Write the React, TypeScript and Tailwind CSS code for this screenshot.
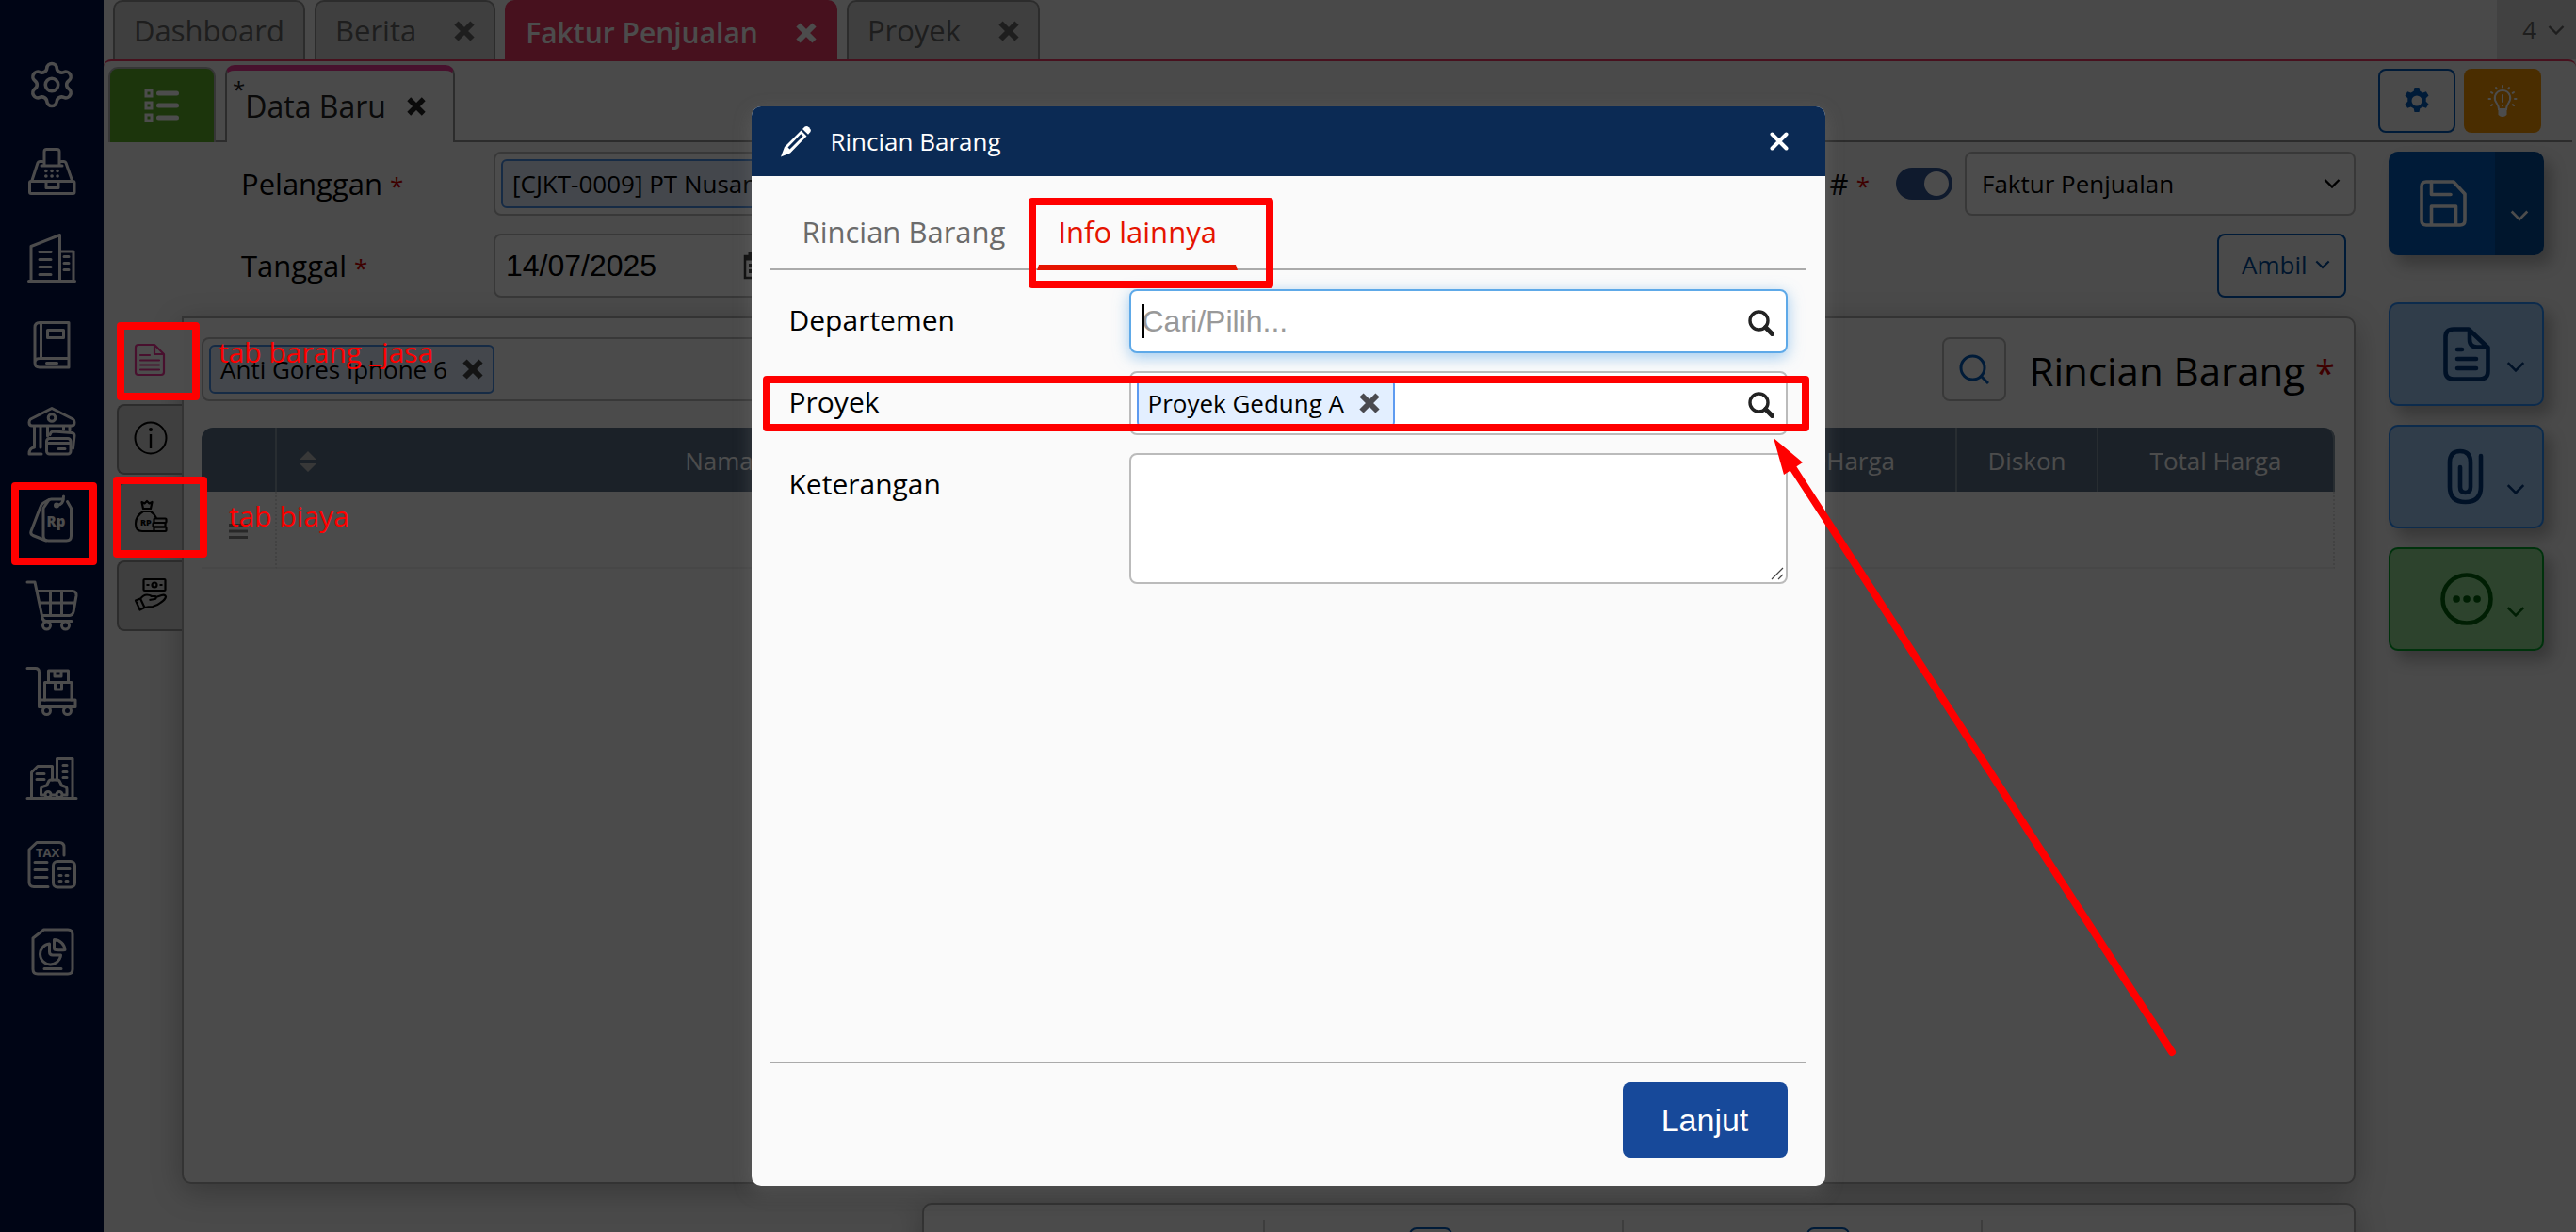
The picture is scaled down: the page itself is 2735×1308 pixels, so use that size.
import React, { useState } from 'react';
import { Settings } from 'lucide-react';

interface IconProps {
  className?: string;
}

// ---------- Small shared icons ----------

const Cross: React.FC<IconProps> = ({ className = 'size-[22px]' }) => (
  <svg viewBox="0 0 22 22" className={className} fill="none" stroke="currentColor" strokeWidth="6" aria-hidden="true">
    <path d="M2.5 2.5l17 17M19.5 2.5l-17 17" />
  </svg>
);

const Chevron: React.FC<IconProps> = ({ className = 'w-[18px] h-[10px]' }) => (
  <svg viewBox="0 0 18 10" className={className} fill="none" stroke="currentColor" strokeWidth="2.4" aria-hidden="true">
    <path d="M1.5 1l7.500 7.500L16.500 1" />
  </svg>
);

const Magnifier: React.FC<IconProps> = ({ className }) => (
  <svg viewBox="0 0 28 28" className={className} fill="none" stroke="currentColor" aria-hidden="true">
    <circle cx="11.500" cy="11.500" r="9.500" strokeWidth="3.400" />
    <path d="M18.500 18.500l7 7" strokeWidth="5" strokeLinecap="round" />
  </svg>
);

// ---------- Sidebar icons, all drawn on a 56 grid ----------

const SideIcon: React.FC<{ children: React.ReactNode }> = ({ children }) => (
  <svg viewBox="0 0 56 56" className="size-14" fill="none" stroke="currentColor" strokeWidth="3" strokeLinecap="round" strokeLinejoin="round" aria-hidden="true">
    {children}
  </svg>
);

const sideMenu: { label: string; icon: React.ReactNode }[] = [
  { label: 'Pengaturan', icon: <Settings className="size-[54px]" strokeWidth={1.6} aria-hidden="true" /> },
  {
    label: 'Kasir',
    icon: (
      <SideIcon>
        <path d="M20 22V7q0-2.500 2.500-2.500h11Q36 4.500 36 7v15M17 22h22M18 17.500h-3q-1.500 0-2 1.500L7 37.500M38 17.500h3q1.500 0 2 1.500l6.500 18.500" />
        <rect x="4.500" y="38.500" width="47.500" height="13" rx="1.500" />
        <path d="M22 39v6.500h13V39" />
        <path d="M21.800 27.500h.1M28 27.500h.1M34 27.500h.1M21.800 33h.1M28 33h.1M34 33h.1" strokeWidth="3.600" />
      </SideIcon>
    ),
  },
  {
    label: 'Perusahaan',
    icon: (
      <SideIcon>
        <path d="M3.500 52.500h49M6 52V15.500L36.500 3.500V52M36.500 21H51v31" />
        <path d="M15 21.500h12M15 29.500h12M15 37.500h12M15 45.500h12M41 26.500h5M41 33.500h5M41 40.500h5" />
      </SideIcon>
    ),
  },
  {
    label: 'Buku Besar',
    icon: (
      <SideIcon>
        <path d="M46 4.500H15q-5 0-5 5V47q0 5 5 5h31zM16.500 5v37M10 47q0-4.500 5-4.500h31M22.500 47.500h11" />
        <rect x="23.500" y="12.500" width="17" height="8" />
      </SideIcon>
    ),
  },
  {
    label: 'Kas dan Bank',
    icon: (
      <SideIcon>
        <path d="M28 3.500L5.500 15Q4 16 4 18.500q0 3.500 3 3.500h42q3 0 3-3.500 0-2.500-1.500-3.500z" />
        <circle cx="28" cy="13.500" r="3.800" />
        <path d="M9.500 23v21M16 23v22M23.500 23v10M40.500 23v3M47 23v4M9.500 45Q4 45.500 4 52h13" />
        <rect x="22.500" y="35.500" width="25.500" height="16.500" rx="3" />
        <path d="M23 40.500h24.500M35 46.500h7M26 31.500l1-2q.5-1.500 3-1.500l19 1.500q3 .5 3 3L50.500 46" />
      </SideIcon>
    ),
  },
  {
    label: 'Penjualan',
    icon: (
      <SideIcon>
        <path d="M19 17.500l5.500-8q1-1.500 3-1.500H40M44.500 10.500l4 7V47q0 5-5 5h-19q-5.500 0-5.500-5V17.500" />
        <path d="M25 8.500l-6 3.500q-2 1-3 4L6 42q-1 3 2 4.500l14 5.500" />
        <path d="M40.500 5q0 9-7 9.500" />
        <circle cx="33" cy="14.500" r="1.500" />
        <text x="22.500" y="36.500" fill="currentColor" stroke="none" className="font-['Open_Sans',sans-serif] font-extrabold text-[15px]">Rp</text>
      </SideIcon>
    ),
  },
  {
    label: 'Pembelian',
    icon: (
      <SideIcon>
        <path d="M2 4h8L18 42q1 3.500 4 3.500h27M12.500 13.500h37q5 0 4.500 5l-3 17q-1 4-4 4H18M26.500 14v25M38.500 14v25M15 26h37.500" />
        <circle cx="22.500" cy="50" r="4" />
        <circle cx="42.500" cy="50" r="4" />
      </SideIcon>
    ),
  },
  {
    label: 'Persediaan',
    icon: (
      <SideIcon>
        <path d="M2 3.500h8.500q4 0 4 4V44.500H53v-7.500H15" />
        <path d="M24.500 18V6h21v12M31 6v6h7V6M20.500 37V18.500h28.500V37M31.500 18.500V26h7v-7.500" />
        <circle cx="22.500" cy="48.500" r="4" fill="#001149" />
        <circle cx="44.500" cy="48.500" r="4" fill="#001149" />
      </SideIcon>
    ),
  },
  {
    label: 'Aset Tetap',
    icon: (
      <SideIcon>
        <path d="M2 49.500h52M6.500 49V22l6.500-6.500h15.500V30M33.500 30V7.500h16.500V49" />
        <path d="M12 23.500h8M12 29.500h8M40 14.500h4M40 21.500h4M40 27.500h4" />
        <path d="M20 46h-3.500v-6q0-2.500 2.500-3l3.500-1 2.500-5q.5-1 2-1h7q1.500 0 2 1l2.500 5 3 1q2.500.5 2.500 3v6h-4M28 46h4" />
        <circle cx="24" cy="45.500" r="3" />
        <circle cx="36" cy="45.500" r="3" />
      </SideIcon>
    ),
  },
  {
    label: 'Pajak',
    icon: (
      <SideIcon>
        <path d="M24 51.500H9q-5 0-5-5V12l8-7.500h24q5 0 5 5V18M10 25.500h13M10 33.500h13M10 41.500h13" />
        <rect x="29.500" y="24.500" width="23" height="27.500" rx="4.500" />
        <path d="M35 32.500h12M36 39.500h2M43 39.500h2M36 45.500h2M43 45.500h2" />
        <text x="11" y="19.500" fill="currentColor" stroke="none" className="font-['Open_Sans',sans-serif] font-bold text-[13px]">TAX</text>
      </SideIcon>
    ),
  },
  {
    label: 'Laporan',
    icon: (
      <SideIcon>
        <path d="M19.500 5H45q5 0 5 5v37q0 5-5 5H13q-5 0-5-5V14zM20 46.500h18" />
        <path d="M25.500 20a11 11 0 1 0 12 12H29q-3.500 0-3.500-3.500zM30.500 15.500a12 12 0 0 1 11.500 11q-4 .5-9.500 0-2 0-2-2z" />
      </SideIcon>
    ),
  },
];

// ---------- Vertical tabs of the detail panel ----------

const sideTabs: { label: string; icon: React.ReactNode }[] = [
  {
    label: 'Barang dan jasa',
    icon: (
      <svg viewBox="0 0 34 36" className="w-[34px] h-9 text-[#f0389a]" fill="none" stroke="currentColor" strokeWidth="2.200" strokeLinejoin="round" strokeLinecap="round" aria-hidden="true">
        <path d="M5 2h17l10 10v19q0 3-3 3H5q-3 0-3-3V5q0-3 3-3zM22 2v10h10M7 13h10M7 18.500h20M7 23.500h20M7 28.500h20" />
      </svg>
    ),
  },
  {
    label: 'Info lainnya',
    icon: (
      <svg viewBox="0 0 36 36" className="size-9" fill="none" stroke="currentColor" strokeWidth="2" aria-hidden="true">
        <circle cx="18" cy="18" r="16.500" />
        <path d="M18 14v15" strokeWidth="2.400" />
        <circle cx="18" cy="9" r="1" />
      </svg>
    ),
  },
  {
    label: 'Biaya',
    icon: (
      <svg viewBox="0 0 36 36" className="size-9" fill="none" stroke="currentColor" strokeWidth="2.200" strokeLinejoin="round" aria-hidden="true">
        <path d="M10 10L8.500 3l3 1.500L14 2l2.500 2.500 3-1.500L18 10zM9 13h10M10 13C5 16 2 21 2 26q0 8 7 8h12M18 13q4 2.500 6 7" />
        <rect x="21.500" y="20.500" width="13" height="4.500" rx="1" />
        <rect x="20.500" y="25" width="13" height="4.500" rx="1" />
        <rect x="21.500" y="29.500" width="13" height="4.500" rx="1" />
        <text x="7" y="28" fill="currentColor" stroke="none" className="font-['Open_Sans',sans-serif] font-extrabold text-[9px]">RP</text>
      </svg>
    ),
  },
  {
    label: 'Pembayaran',
    icon: (
      <svg viewBox="0 0 36 36" className="size-9" fill="none" stroke="currentColor" strokeWidth="2.200" strokeLinejoin="round" aria-hidden="true">
        <rect x="10.500" y="2" width="23" height="12" rx="1" />
        <circle cx="22" cy="8" r="2.500" />
        <path d="M13.500 8h3M27.500 8h3M2 24.500l5-2 4.500 9.500-5 2.500zM7 23q3-4.500 7-4.500 3 0 5 1.500h4q1.500 2-.5 3l-6 1M23.500 21l6-2q4-1 4.500 1.500-.5 3-5 6-4 3.500-9 4.500-5 0-8 1" />
      </svg>
    ),
  },
];

const Required: React.FC<IconProps> = ({ className = 'text-[26px]' }) => (
  <span className={`text-[#d00000] ${className}`}>*</span>
);

const tabBase = "flex items-center gap-10 h-[63px] px-5 border-2 border-b-0 rounded-t-[10px] leading-none whitespace-nowrap";
const tabIdle = 'bg-[#d4d4d4] border-[#949494] text-[#666] text-[31px]';

const TopTabs: React.FC = () => (
  <nav className="flex items-start h-[63px] pl-[10px] gap-[10px] shrink-0" aria-label="Halaman terbuka">
    <button className={`${tabBase} ${tabIdle}`}>Dashboard</button>
    <button className={`${tabBase} ${tabIdle}`}>Berita <Cross /></button>
    <button className={`${tabBase} bg-[#ef3964] border-[#ef3964] text-white text-[30px] font-semibold pt-1`}>Faktur Penjualan <Cross /></button>
    <button className={`${tabBase} ${tabIdle}`}>Proyek <Cross /></button>
    <button className="ml-auto flex items-center justify-end gap-3 w-[84px] h-[63px] pr-3 bg-[#dadada] text-[#666] text-[26px]">
      4 <Chevron />
    </button>
  </nav>
);

const SubTabs: React.FC = () => (
  <div className="flex items-end h-[86px] pl-[5px] pr-1 shrink-0">
    <button aria-label="Daftar" className="flex items-center justify-center w-[114px] h-20 bg-[#60b32b] border-2 border-b-0 border-[#b5b5b5] rounded-t-[10px] text-white">
      <svg viewBox="0 0 38 36" className="w-[38px] h-9" fill="none" stroke="currentColor" aria-hidden="true">
        <path d="M2 2h6v6H2zM2 15h6v6H2zM2 28h6v6H2z" strokeWidth="3" />
        <path d="M15.500 5h19M15.500 18h19M15.500 31h19" strokeWidth="5" strokeLinecap="round" />
      </svg>
    </button>
    <div className="w-[10px] border-b-2 border-[#949494]" />
    <button className="flex items-center w-[244px] h-[82px] pl-[6px] border-x-2 border-t-[6px] border-x-[#949494] border-t-[#ef3996] rounded-t-[10px] text-[#222] text-[32px] whitespace-nowrap">
      <span className="self-start mt-2 text-2xl leading-6">*</span>
      Data Baru
      <Cross className="size-5 ml-[22px]" />
    </button>
    <div className="flex-1 self-stretch flex items-start justify-end gap-[9px] pt-2 pr-[33px] border-b-2 border-[#949494]">
      <button aria-label="Pengaturan formulir" className="flex items-center justify-center w-[82px] h-[68px] border-2 border-[#005abb] rounded-[8px] text-[#005abb]">
        <svg viewBox="0 0 28 28" className="size-7" aria-hidden="true">
          <path
            fill="currentColor"
            fillRule="evenodd"
            d="M11.500 0h5l.8 3.800 3 1.700 3.600-1.200 2.600 4.300-2.800 2.600v3.600l2.800 2.600-2.600 4.300-3.600-1.200-3 1.700-.8 3.800h-5l-.8-3.800-3-1.700-3.600 1.200-2.600-4.300 2.800-2.600v-3.600L1.500 8.600l2.600-4.300 3.600 1.200 3-1.700zM14 8.500a5.500 5.500 0 1 0 0 11 5.500 5.500 0 0 0 0-11z"
          />
        </svg>
      </button>
      <button aria-label="Tips" className="flex items-center justify-center w-[82px] h-[68px] bg-[#f79600] rounded-[8px] text-white">
        <svg viewBox="0 0 32 34" className="w-8 h-[34px]" fill="none" stroke="currentColor" strokeWidth="2" strokeLinecap="round" aria-hidden="true">
          <path d="M12 26q0-3-2-6-3-4-2-8 2-6 8-6t8 6q1 4-2 8-2 3-2 6z" />
          <path d="M12.500 27h7v4.500q-3.500 3-7 0z" fill="currentColor" />
          <path d="M16 11v7M16 22v.2M16 1v1.500M9 3l.8 1.200M23 3l-.8 1.200M4 8l1.300.8M28 8l-1.300.8M1.500 15H3M29 15h1.500M4 22l1.300-.8M28 22l-1.300-.8" />
        </svg>
      </button>
    </div>
  </div>
);

const InvoiceForm: React.FC = () => (
  <form className="flex flex-col gap-[19px]">
    <div className="flex items-center h-[68px]">
      <label htmlFor="pelanggan" className="w-[400px] pl-[132px] text-[31px]">Pelanggan <Required /></label>
      <div className="flex items-center w-[480px] h-[68px] p-[6px] border-2 border-[#bbb] rounded-[8px] bg-white">
        <span className="flex items-center h-[52px] px-[10px] bg-[#e3efff] border-2 border-[#4a8fe8] rounded-[6px] text-[26px] whitespace-nowrap">[CJKT-0009] PT Nusantara</span>
        <input id="pelanggan" className="min-w-0 flex-1 outline-none" />
      </div>
      <label htmlFor="nomor" className="ml-auto mr-7 text-[31px] whitespace-nowrap"># <Required /></label>
      <input
        id="nomor"
        type="checkbox"
        defaultChecked
        className="appearance-none flex items-center justify-end w-[60px] h-[34px] mr-[13px] pr-1 rounded-full bg-[#325796] before:size-[26px] before:rounded-full before:bg-white"
      />
      <div className="relative">
        <select aria-label="Penomoran" className="appearance-none w-[415px] h-[68px] pl-4 border-2 border-[#bbb] rounded-[8px] bg-white text-[26px]">
          <option>Faktur Penjualan</option>
        </select>
        <Chevron className="absolute right-4 top-[29px] w-[18px] h-[10px] pointer-events-none" />
      </div>
    </div>
    <div className="flex items-center h-[68px]">
      <label htmlFor="tanggal" className="w-[400px] pl-[132px] text-[31px]">Tanggal <Required /></label>
      <div className="flex items-center w-[306px] h-[68px] px-[11px] border-2 border-[#bbb] rounded-[8px] bg-white">
        <input id="tanggal" defaultValue="14/07/2025" className="min-w-0 flex-1 outline-none font-['Liberation_Sans',sans-serif] text-[32px]" />
        <svg viewBox="0 0 28 30" className="w-7 h-[30px]" fill="none" stroke="#222" strokeWidth="2.500" aria-hidden="true">
          <path d="M2 5h24v23H2z" />
          <path d="M2 7h24M8 1v6M20 1v6" strokeWidth="5" />
          <path d="M6 15h4M12 15h4M18 15h4M6 21h4M12 21h4M18 21h4" strokeWidth="4" />
        </svg>
      </div>
      <button type="button" className="flex items-center gap-2 ml-auto mr-[10px] w-[137px] h-[68px] pl-6 pb-[2px] border-2 border-[#005abb] rounded-[8px] text-[#004a99] text-[26px]">
        Ambil <Chevron className="w-4 h-[10px]" />
      </button>
    </div>
  </form>
);

const th = 'h-[68px] pt-[3px] font-normal border-r-2 border-[#8796a6]';

const DetailPanel: React.FC = () => (
  <div className="flex mt-5">
    <div className="flex flex-col gap-2 w-[69px] pt-[10px] shrink-0 relative z-10">
      {sideTabs.map((tab, i) => (
        <button
          key={tab.label}
          aria-label={tab.label}
          className={`flex items-center h-[75px] pl-4 pb-1 border-2 border-r-0 border-[#949494] rounded-l-[8px] ${i === 0 ? 'w-[71px] bg-white' : 'w-[69px] bg-[#d4d4d4]'}`}
        >
          {tab.icon}
        </button>
      ))}
    </div>
    <section className="flex-1 min-h-[921px] pl-[19px] pr-5 pt-5 bg-[#fcfcfc] border-2 border-[#aaa] rounded-[10px] rounded-tl-none shadow-[0_8px_32px_rgba(0,0,0,0.25)]">
      <div className="flex items-center h-[68px]">
        <div className="flex items-center w-[1240px] h-[68px] p-[6px] border-2 border-[#bbb] rounded-[8px]">
          <span className="flex items-center gap-4 h-[52px] px-[10px] bg-[#e3efff] border-2 border-[#4a8fe8] rounded-[6px] text-[26px] whitespace-nowrap">
            Anti Gores Iphone 6
            <button aria-label="Hapus Anti Gores Iphone 6" className="text-[#444]"><Cross /></button>
          </span>
          <input aria-label="Cari barang" className="min-w-0 flex-1 outline-none" />
        </div>
        <button aria-label="Cari rincian" className="flex items-center justify-center ml-auto w-[68px] h-[68px] border-2 border-[#bbb] rounded-[8px] text-[#005abb]">
          <svg viewBox="0 0 32 32" className="size-8" fill="none" stroke="currentColor" strokeWidth="3" aria-hidden="true">
            <circle cx="14.500" cy="14.500" r="12.500" />
            <path d="M23 23l8 8" />
          </svg>
        </button>
        <h2 className="ml-[25px] pt-[3px] text-[42px] whitespace-nowrap">Rincian Barang <Required className="text-[38px]" /></h2>
      </div>
      <table className="w-full mt-7 table-fixed border-separate border-spacing-0 text-[26px]">
        <colgroup>
          <col className="w-20" />
          <col />
          <col className="w-[180px]" />
          <col className="w-[180px]" />
          <col className="w-[166px]" />
          <col className="w-[226px]" />
          <col className="w-[150px]" />
          <col className="w-[251px]" />
        </colgroup>
        <thead>
          <tr className="bg-[#5a7188] text-white">
            <th className={`${th} rounded-tl-xl`} aria-label="Urutan" />
            <th className={th}>
              <span className="flex items-center pl-6">
                <svg viewBox="0 0 18 22" className="w-[18px] h-[22px] text-[#bbb]" fill="currentColor" aria-hidden="true">
                  <path d="M9 0l9 9H0zM9 22l9-9H0z" />
                </svg>
                <span className="flex-1 pr-10">Nama Barang</span>
              </span>
            </th>
            <th className={th}>Kode #</th>
            <th className={th}>Kuantitas</th>
            <th className={th}>Satuan</th>
            <th className={th}>@Harga</th>
            <th className={th}>Diskon</th>
            <th className={`${th} rounded-tr-xl`}>Total Harga</th>
          </tr>
        </thead>
        <tbody>
          <tr>
            <td className="h-[82px] border-b-2 border-b-[#eee] border-r-2 border-r-[#ddd] [border-right-style:dotted]">
              <svg viewBox="0 0 20 18" className="w-5 h-[18px] mt-1 mx-auto" stroke="#888" strokeWidth="3" aria-hidden="true">
                <path d="M0 2.500h20M0 9h20M0 15.500h20" />
              </svg>
            </td>
            <td colSpan={7} className="border-b-2 border-b-[#eee] border-r-2 border-r-[#ddd] [border-right-style:dotted]" />
          </tr>
        </tbody>
      </table>
    </section>
  </div>
);

const TotalsPanel: React.FC = () => (
  <section className="grid grid-cols-[362px_381px_381px_1fr] h-[120px] mt-5 ml-[855px] pt-4 bg-[#fcfcfc] border-2 border-[#aaa] rounded-[10px] shadow-[0_8px_32px_rgba(0,0,0,0.25)]">
    <div className="border-r-2 border-[#ccc]" />
    <div className="border-r-2 border-[#ccc] pl-[153px] pt-2">
      <button aria-label="Ubah diskon" className="block w-[46px] h-10 border-2 border-[#005abb] rounded-[8px]" />
    </div>
    <div className="border-r-2 border-[#ccc] pl-[194px] pt-2">
      <button aria-label="Ubah pajak" className="block w-[46px] h-10 border-2 border-[#005abb] rounded-[8px]" />
    </div>
    <div />
  </section>
);

const actionBase = 'relative flex items-center h-[110px] border-2 rounded-[10px] shadow-[8px_10px_16px_rgba(0,0,0,0.25)]';

const Actions: React.FC = () => (
  <aside className="flex flex-col gap-5 w-[165px] shrink-0">
    <div className="flex h-[110px] mb-[30px] rounded-[10px] overflow-hidden shadow-[8px_10px_16px_rgba(0,0,0,0.25)] text-white">
      <button aria-label="Simpan" className="flex-1 pl-[33px] bg-[#005abb]">
        <svg viewBox="0 0 50 50" className="size-[50px]" fill="none" stroke="currentColor" strokeWidth="3.600" strokeLinejoin="round" aria-hidden="true">
          <path d="M7 2h29l12 13v28q0 5-5 5H7q-5 0-5-5V7q0-5 5-5z" />
          <path d="M12.500 2v13.500H33" strokeLinecap="round" />
          <path d="M12.500 48V28h26v20" />
        </svg>
      </button>
      <button aria-label="Pilihan simpan" className="flex items-center justify-center w-[52px] pt-[26px] bg-[#004a96]">
        <Chevron className="w-5 h-3" />
      </button>
    </div>
    <button aria-label="Dokumen" className={`${actionBase} pl-14 bg-[#a0cbf7] border-[#2b8fff] text-[#003a80]`}>
      <svg viewBox="0 0 50 58" className="w-[50px] h-[58px]" fill="none" stroke="currentColor" strokeWidth="4.600" strokeLinejoin="round" strokeLinecap="round" aria-hidden="true">
        <path d="M11 2.500h16L47.500 22v25q0 8.500-8.500 8.500H11q-8.500 0-8.500-8.500V11q0-8.500 8.500-8.500zM28 3v10q0 8.500 8 8.500h11M15 24h5M15 34h20M15 44h20" />
      </svg>
      <Chevron className="absolute right-[18px] top-[61px] w-5 h-[11px]" />
    </button>
    <button aria-label="Lampiran" className={`${actionBase} pl-[60px] bg-[#a0cbf7] border-[#2b8fff] text-[#003a80]`}>
      <svg viewBox="0 0 40 60" className="w-10 h-[60px]" fill="none" stroke="currentColor" strokeWidth="4.600" strokeLinecap="round" aria-hidden="true">
        <path d="M36 8v33q0 16-16.500 16T3 41V15Q3 3 14 3t11 12v26q0 6-5.500 6T14 41V20" />
      </svg>
      <Chevron className="absolute right-[18px] top-[61px] w-5 h-[11px]" />
    </button>
    <button aria-label="Lainnya" className={`${actionBase} pl-[53px] bg-[#96df96] border-[#00a72b] text-[#00660d]`}>
      <svg viewBox="0 0 56 56" className="size-14" aria-hidden="true">
        <circle cx="28" cy="28" r="25.500" fill="none" stroke="currentColor" strokeWidth="4.600" />
        <path d="M17 28h.1M28 28h.1M39 28h.1" stroke="currentColor" strokeWidth="7.500" strokeLinecap="round" />
      </svg>
      <Chevron className="absolute right-[18px] top-[61px] w-5 h-[11px]" />
    </button>
  </aside>
);

// ---------- Item detail dialog ----------

const dialogTab = 'h-[62px] px-5 pb-[14px] border-x-2 border-b-[6px] border-x-transparent text-[31px] leading-[42px] whitespace-nowrap -mb-[2px]';
const dialogTabOn = 'border-b-[#e51400] text-[#e51400]';
const dialogTabOff = 'border-b-transparent text-[#6b6b6b]';
const dialogRow = 'flex items-start';
const dialogLabel = 'flex-1 text-[30px] leading-[66px]';

const ItemDialog: React.FC = () => {
  const [tab, setTab] = useState<'rincian' | 'info'>('info');

  return (
    <div role="dialog" aria-label="Rincian Barang" className="flex flex-col w-[1140px] h-[1146px] bg-[#fafafa] rounded-[10px] overflow-hidden shadow-[0_6px_20px_rgba(130,130,130,0.3)]">
      <header className="flex items-center h-[74px] pl-[30px] pr-[39px] bg-[#0b2a54] text-white text-[26px]">
        <svg viewBox="0 0 34 34" className="size-[34px]" aria-hidden="true">
          <path fill="currentColor" fillRule="evenodd" d="M22.500 5.500l6 6-17.500 18L1 33.500l4-10.500zM22.300 9.200L8.500 23.500l2 2L24.600 11.500z" />
          <path fill="currentColor" d="M24 4l2.500-2.500q2-1.500 4.500.8t1.500 4.700L30 9.800z" />
        </svg>
        <h1 className="ml-5">Rincian Barang</h1>
        <button aria-label="Tutup" className="ml-auto">
          <svg viewBox="0 0 20 20" className="size-5" stroke="currentColor" strokeWidth="4" strokeLinecap="round" aria-hidden="true">
            <path d="M2.500 2.500l15 15M17.500 2.500l-15 15" />
          </svg>
        </button>
      </header>

      <nav className="flex items-end gap-3 h-[100px] mx-5 pl-3 border-b-2 border-[#aaa]">
        <button onClick={() => setTab('rincian')} className={`${dialogTab} ${tab === 'rincian' ? dialogTabOn : dialogTabOff}`}>
          Rincian Barang
        </button>
        <button onClick={() => setTab('info')} className={`${dialogTab} ${tab === 'info' ? dialogTabOn : dialogTabOff}`}>
          Info lainnya
        </button>
      </nav>

      <form className="flex-1 flex flex-col gap-[19px] mx-5 pt-5 pl-5 pr-5">
        <div className={dialogRow}>
          <label htmlFor="departemen" className={dialogLabel}>Departemen</label>
          <div className="relative flex items-center w-[699px] h-[68px] px-3 bg-white border-2 border-[#5ea9e8] rounded-[8px] shadow-[0_4px_16px_rgba(94,169,232,0.6)]">
            <span className="absolute left-3 h-9 w-[2px] bg-black" />
            <input id="departemen" placeholder="Cari/Pilih..." className="min-w-0 flex-1 outline-none font-['Liberation_Sans',sans-serif] text-[32px] placeholder:text-[#999]" />
            <Magnifier className="size-7 mt-1 text-[#222]" />
          </div>
        </div>
        <div className={dialogRow}>
          <label htmlFor="proyek" className={dialogLabel}>Proyek</label>
          <div className="flex items-center w-[699px] h-[68px] pl-[6px] pr-3 bg-white border-2 border-[#bbb] rounded-[8px]">
            <span className="flex items-center gap-4 h-[52px] pl-[10px] pr-[14px] bg-[#e3efff] border-2 border-[#5e9bf0] rounded-[6px] text-[26px] whitespace-nowrap">
              Proyek Gedung A
              <button type="button" aria-label="Hapus Proyek Gedung A" className="text-[#4a4a4f]"><Cross /></button>
            </span>
            <input id="proyek" className="min-w-0 flex-1 outline-none" />
            <Magnifier className="size-7 mt-1 text-[#222]" />
          </div>
        </div>
        <div className={dialogRow}>
          <label htmlFor="keterangan" className={dialogLabel}>Keterangan</label>
          <div className="relative w-[699px] h-[139px]">
            <textarea id="keterangan" className="size-full p-3 bg-white border-2 border-[#bbb] rounded-[8px] outline-none resize-none text-[26px]" />
            <svg viewBox="0 0 14 14" className="absolute right-1 bottom-1 size-[14px]" stroke="#444" strokeWidth="1.200" aria-hidden="true">
              <path d="M1 13L13 1M8 13l5-5" />
            </svg>
          </div>
        </div>
      </form>

      <footer className="flex justify-end mx-5 pt-5 pr-5 pb-[30px] border-t-2 border-[#aaa]">
        <button className="w-[175px] h-20 bg-[#17499a] rounded-[8px] text-white font-['Liberation_Sans',sans-serif] text-[34px]">Lanjut</button>
      </footer>
    </div>
  );
};

// Red guide marks lying over the whole screen
const GuideMarks: React.FC = () => (
  <div className="absolute inset-0 z-30 pointer-events-none text-[#ff0000] text-[30px] leading-10 whitespace-nowrap">
    <div className="absolute left-[124px] top-[342px] w-[88px] h-[83px] border-8 border-[#ff0000] rounded-[4px]" />
    <div className="absolute left-[12px] top-[512px] w-[91px] h-[88px] border-8 border-[#ff0000] rounded-[4px]" />
    <div className="absolute left-[120px] top-[506px] w-[100px] h-[86px] border-8 border-[#ff0000] rounded-[4px]" />
    <div className="absolute left-[1092px] top-[210px] w-[260px] h-[96px] border-8 border-[#ff0000] rounded-[4px]" />
    <div className="absolute left-[810px] top-[399px] w-[1111px] h-[59px] border-8 border-[#ff0000] rounded-[4px]" />
    <span className="absolute left-[232px] top-[354px]">tab barang _jasa</span>
    <span className="absolute left-[243px] top-[528px]">tab biaya</span>
    <svg viewBox="0 0 440 670" className="absolute left-[1875px] top-[460px] w-[440px] h-[670px]" aria-hidden="true">
      <path d="M28 36L431 657" stroke="currentColor" strokeWidth="8" strokeLinecap="round" />
      <path d="M8 5l31 26-20 13z" fill="currentColor" />
    </svg>
  </div>
);

const App: React.FC = () => {
  return (
    <div className="relative flex h-screen overflow-hidden bg-[#f4f4f4] text-black font-['Open_Sans','Noto_Sans',sans-serif]">
      {/* Sidebar */}
      <nav className="flex flex-col w-[110px] pt-11 bg-[#001149] text-white shrink-0" aria-label="Menu utama">
        {sideMenu.map((item) => (
          <a key={item.label} href="#" aria-label={item.label} className="flex items-center justify-center h-[92px] shrink-0">
            {item.icon}
          </a>
        ))}
      </nav>

      {/* Main */}
      <main className="flex-1 min-w-0 flex flex-col">
        <TopTabs />
        <div className="flex-1 bg-[#f7f7f7] border-t-2 border-[#ef3964] rounded-t-[8px]">
          <SubTabs />
          <div className="flex gap-[35px] pl-[14px] pr-[34px] pt-[10px]">
            <div className="flex-1 min-w-0">
              <InvoiceForm />
              <DetailPanel />
              <TotalsPanel />
            </div>
            <Actions />
          </div>
        </div>
      </main>

      {/* Dialog */}
      <div className="absolute inset-0 z-20 flex items-start justify-center pt-[113px] bg-black/70">
        <ItemDialog />
      </div>

      <GuideMarks />
    </div>
  );
};

export default App;
